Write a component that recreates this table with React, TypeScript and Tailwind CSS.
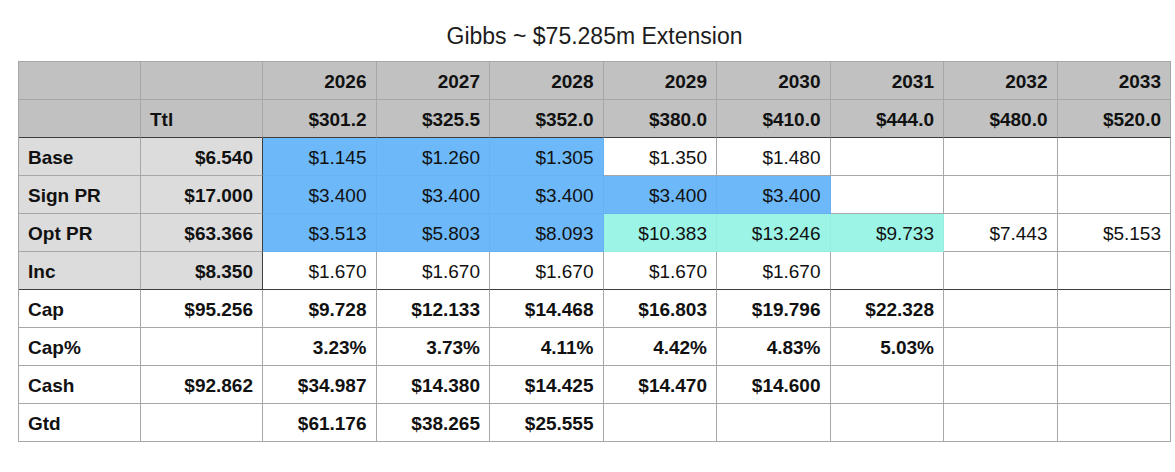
import { clsx } from "clsx";

type Fill = "blue" | "teal" | undefined;

interface Row {
  label: string;
  total: string;
  values: string[];
  fills?: Fill[];
  bold?: boolean;
  shaded?: boolean;
  darkBottom?: boolean;
}

const YEARS = ["2026", "2027", "2028", "2029", "2030", "2031", "2032", "2033"];
const CAPS = ["$301.2", "$325.5", "$352.0", "$380.0", "$410.0", "$444.0", "$480.0", "$520.0"];

const ROWS: Row[] = [
  {
    label: "Base",
    total: "$6.540",
    values: ["$1.145", "$1.260", "$1.305", "$1.350", "$1.480", "", "", ""],
    fills: ["blue", "blue", "blue"],
    shaded: true,
  },
  {
    label: "Sign PR",
    total: "$17.000",
    values: ["$3.400", "$3.400", "$3.400", "$3.400", "$3.400", "", "", ""],
    fills: ["blue", "blue", "blue", "blue", "blue"],
    shaded: true,
  },
  {
    label: "Opt PR",
    total: "$63.366",
    values: ["$3.513", "$5.803", "$8.093", "$10.383", "$13.246", "$9.733", "$7.443", "$5.153"],
    fills: ["blue", "blue", "blue", "teal", "teal", "teal"],
    shaded: true,
  },
  {
    label: "Inc",
    total: "$8.350",
    values: ["$1.670", "$1.670", "$1.670", "$1.670", "$1.670", "", "", ""],
    shaded: true,
    darkBottom: true,
  },
  {
    label: "Cap",
    total: "$95.256",
    values: ["$9.728", "$12.133", "$14.468", "$16.803", "$19.796", "$22.328", "", ""],
    bold: true,
  },
  {
    label: "Cap%",
    total: "",
    values: ["3.23%", "3.73%", "4.11%", "4.42%", "4.83%", "5.03%", "", ""],
    bold: true,
  },
  {
    label: "Cash",
    total: "$92.862",
    values: ["$34.987", "$14.380", "$14.425", "$14.470", "$14.600", "", "", ""],
    bold: true,
  },
  {
    label: "Gtd",
    total: "",
    values: ["$61.176", "$38.265", "$25.555", "", "", "", "", ""],
    bold: true,
  },
];

const cell = "flex h-[38px] items-center border-r border-b px-[9px] pt-[3px]";

export default function App() {
  return (
    <div
      className="min-h-[472px] w-[1175px] bg-white pt-[25px] text-[#111]"
      style={{ fontFamily: '"Liberation Sans", Arial, Helvetica, sans-serif' }}
    >
      <div className="ml-[18px] w-[1153px]">
        <h1 className="text-center text-[23px] leading-[23px] font-normal text-[#1c1c1c]">
          Gibbs ~ $75.285m Extension
        </h1>

        <div className="mt-[13px] grid grid-cols-[122px_122px_repeat(8,1fr)] border-t border-l border-[#a7a7a7] text-[19px]">
          {/* header: years */}
          <div className={clsx(cell, "border-[#a7a7a7] bg-[#c0c1c0]")} />
          <div className={clsx(cell, "border-[#a7a7a7] bg-[#c0c1c0]")} />
          {YEARS.map((y) => (
            <div key={y} className={clsx(cell, "justify-end border-[#a7a7a7] bg-[#c0c1c0] font-bold")}>
              {y}
            </div>
          ))}

          {/* header: cap totals */}
          <div className={clsx(cell, "border-r-[#a7a7a7] border-b-[#3d3d3d] bg-[#c0c1c0]")} />
          <div className={clsx(cell, "border-r-[#a7a7a7] border-b-[#3d3d3d] bg-[#c0c1c0] font-bold")}>Ttl</div>
          {CAPS.map((c) => (
            <div
              key={c}
              className={clsx(cell, "justify-end border-r-[#a7a7a7] border-b-[#3d3d3d] bg-[#c0c1c0] font-bold")}
            >
              {c}
            </div>
          ))}

          {ROWS.map((row) => {
            const bottom = row.darkBottom ? "border-b-[#3d3d3d]" : "border-b-[#a7a7a7]";
            return (
              <div key={row.label} className="contents">
                <div
                  className={clsx(
                    cell,
                    "border-r-[#a7a7a7] font-bold",
                    bottom,
                    row.shaded ? "bg-[#dcdcdc]" : "bg-white"
                  )}
                >
                  {row.label}
                </div>
                <div
                  className={clsx(
                    cell,
                    "justify-end font-bold",
                    bottom,
                    row.shaded ? "border-r-[#3d3d3d] bg-[#dcdcdc]" : "border-r-[#a7a7a7] bg-white"
                  )}
                >
                  {row.total}
                </div>
                {row.values.map((v, i) => {
                  const fill = row.fills?.[i];
                  return (
                    <div
                      key={i}
                      className={clsx(
                        cell,
                        "justify-end",
                        row.bold && "font-bold",
                        fill === "blue" && "border-r-[#68b2f2] bg-[#6cb8f8]",
                        fill === "teal" && "border-r-[#97ede0] bg-[#9cf4e6]",
                        !fill && "border-r-[#a7a7a7] bg-white",
                        row.darkBottom
                          ? "border-b-[#3d3d3d]"
                          : fill === "blue"
                            ? "border-b-[#68b2f2]"
                            : fill === "teal"
                              ? "border-b-[#97ede0]"
                              : "border-b-[#a7a7a7]"
                      )}
                    >
                      {v}
                    </div>
                  );
                })}
              </div>
            );
          })}
        </div>
      </div>
    </div>
  );
}
